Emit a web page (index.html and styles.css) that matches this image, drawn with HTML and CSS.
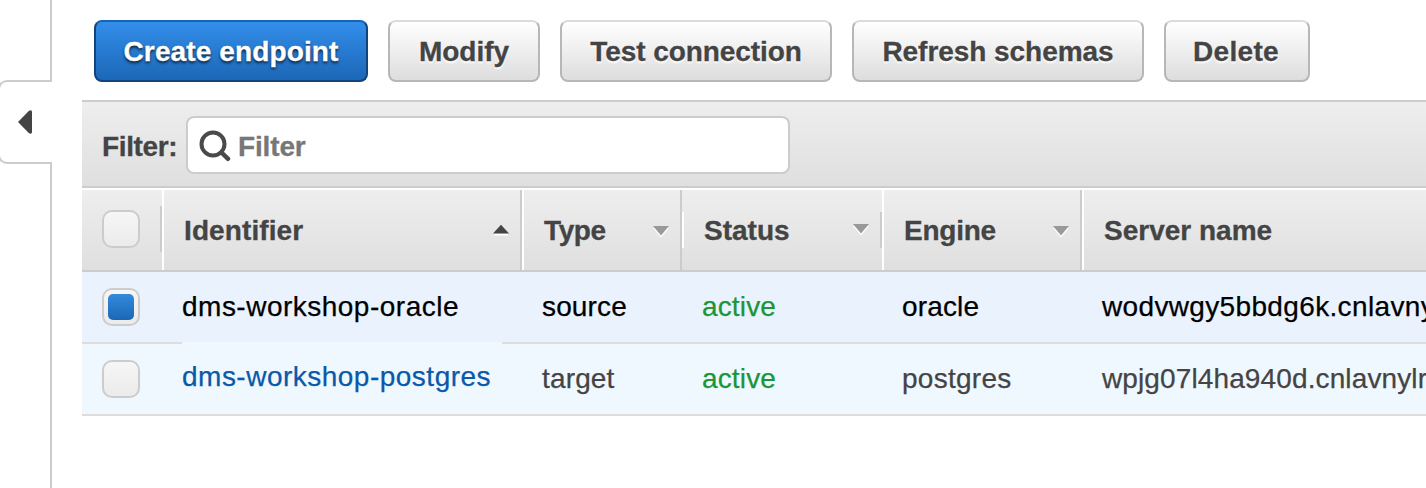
FILE: index.html
```html
<!DOCTYPE html>
<html lang="en">
<head>
<meta charset="utf-8">
<title>Endpoints</title>
<link rel="stylesheet" href="styles.css">
</head>
<body>
<div class="app">
  <aside class="rail">
    <div class="rail-line rail-top"></div>
    <div class="rail-tab"><svg width="14" height="24" viewBox="0 0 14 24"><path d="M0 12 11 .8Q14-.6 14 2V22Q14 24.600 11 23.200Z" fill="#444"/></svg></div>
    <div class="rail-line rail-bottom"></div>
  </aside>
  <main class="main">
    <div class="toolbar">
      <button class="btn primary w-create">Create endpoint</button>
      <button class="btn w-modify">Modify</button>
      <button class="btn w-test">Test connection</button>
      <button class="btn w-refresh">Refresh schemas</button>
      <button class="btn w-delete">Delete</button>
    </div>
    <div class="filterbar">
      <span class="filter-label">Filter:</span>
      <div class="filter-input">
        <svg class="search" width="34" height="34" viewBox="0 0 34 34" fill="none" stroke="#4a4a4a"><circle cx="15" cy="15" r="11.500" stroke-width="4"/><path d="M23.500 23.500 30 29.800" stroke-width="4.500" stroke-linecap="round"/></svg>
        <span class="placeholder">Filter</span>
      </div>
    </div>
    <div class="grid head">
      <div class="th check short-end"><span class="box"></span></div>
      <div class="th start end"><span class="t-ident">Identifier</span><svg class="sort" width="16" height="12" viewBox="0 0 16 12"><path d="M1 10.500H15" stroke="#fff" stroke-width="2"/><path d="M0 9.500 8 .8 16 9.500Z" fill="#444"/></svg></div>
      <div class="th start end"><span class="t-type">Type</span><svg class="sort down" width="16" height="12" viewBox="0 0 16 12"><path d="M0 2 8 11.500 16 2Z" fill="#fff"/><path d="M0 0H16L8 9.500Z" fill="#999"/></svg></div>
      <div class="th short-start short-end"><span class="t-status">Status</span><svg class="sort" width="16" height="12" viewBox="0 0 16 12"><path d="M0 2 8 11.500 16 2Z" fill="#fff"/><path d="M0 0H16L8 9.500Z" fill="#999"/></svg></div>
      <div class="th start end"><span class="t-engine">Engine</span><svg class="sort down" width="16" height="12" viewBox="0 0 16 12"><path d="M0 2 8 11.500 16 2Z" fill="#fff"/><path d="M0 0H16L8 9.500Z" fill="#999"/></svg></div>
      <div class="th start"><span class="t-server">Server name</span></div>
    </div>
    <div class="grid row selected">
      <div class="check"><span class="box"><span class="tick"></span></span></div>
      <div><span class="c-id">dms-workshop-oracle</span></div>
      <div><span class="c-short">source</span></div>
      <div class="active"><span class="c-short">active</span></div>
      <div><span class="c-short">oracle</span></div>
      <div><span class="c-host1">wodvwgy5bbdg6k.cnlavny</span></div>
    </div>
    <div class="grid row">
      <div class="check"><span class="box"></span></div>
      <div><a class="link c-id">dms-workshop-postgres</a></div>
      <div><span class="c-short">target</span></div>
      <div class="active"><span class="c-short">active</span></div>
      <div><span class="c-postgres">postgres</span></div>
      <div><span class="c-host2">wpjg07l4ha940d.cnlavnylr</span></div>
    </div>
  </main>
</div>
</body>
</html>
```
FILE: styles.css
```css
* { box-sizing: border-box; }
body { margin: 0; background: #fff; color: #444; font: 28px "Liberation Sans", Arial, sans-serif; overflow: hidden; }
svg { display: block; flex: none; }
.app { display: flex; height: 488px; }
.rail { width: 52px; flex: none; display: flex; flex-direction: column; }
.rail-line { border-right: 2px solid #ccc; }
.rail-top { height: 80px; }
.rail-bottom { flex: 1; }
.rail-tab { height: 84px; margin-left: -2px; border: 2px solid #ccc; border-right: 0; border-radius: 9px 0 0 9px; padding: 28px 0 0 18px; }
.main { flex: 1; min-width: 0; margin-left: 30px; }
.toolbar { height: 100px; padding: 20px 0 0 12px; display: flex; gap: 20px; }
.btn { height: 62px; flex: none; padding: 2px 0 0; border: 2px solid #b7b7b7; border-top-color: #dcdcdc; border-radius: 8px; background: linear-gradient(#fff, #ddd); color: #444; font: bold 28px "Liberation Sans", Arial, sans-serif; text-shadow: 0 2px 2px #fff; white-space: nowrap; }
.primary { color: #fff; background: linear-gradient(#338eea, #1b67b7); border-color: #12447b; border-top-color: #1763b5; text-shadow: 0 2px 3px rgba(0, 0, 0, .75); }
.btn, .filterbar, .head { -webkit-text-stroke: .3px; }
.w-create { width: 274px; letter-spacing: .12px; }
.w-modify { width: 152px; }
.w-test { width: 272px; letter-spacing: -.07px; }
.w-refresh { width: 292px; letter-spacing: -.05px; }
.w-delete { width: 146px; padding-right: 2px; letter-spacing: .3px; }
.filterbar { height: 88px; display: flex; align-items: center; border-top: 2px solid #ccc; border-bottom: 2px solid #ccc; background: linear-gradient(#eee, #dfdfdf); padding-left: 20px; font-weight: bold; }
.filter-label { width: 84px; letter-spacing: -.35px; padding-top: 5px; }
.filter-input { width: 604px; height: 58px; margin-top: 2px; display: flex; align-items: center; border: 2px solid #ccc; border-radius: 8px; background: #fff; color: #777; padding-left: 10px; }
.search { filter: blur(.5px); margin-top: 2px; }
.placeholder { margin-left: 6px; letter-spacing: -.15px; padding-top: 3px; }
.grid { display: grid; grid-template-columns: 80px 360px 160px 200px 200px 1fr; white-space: nowrap; }
.head { height: 84px; border-top: 2px solid #fff; border-bottom: 2px solid #ccc; background: linear-gradient(#eee, #dfdfdf); font-weight: bold; line-height: 78px; }
.th { height: 80px; display: flex; align-items: center; justify-content: space-between; padding: 0 13px 0 22px; background-repeat: no-repeat; }
.th > span:not(.box) { padding-top: 2px; }
.t-ident { letter-spacing: .1px; }
.t-type { letter-spacing: -.4px; }
.t-engine { letter-spacing: -.25px; }
.start { border-left: 2px solid #fff; padding-left: 20px; }
.end { border-right: 2px solid #ccc; padding-right: 11px; }
.short-start { background-image: linear-gradient(#fff, #fff), linear-gradient(#ccc, #ccc); background-size: 2px 36px, 2px 36px; background-position: left center, right center; }
.check.short-end { background-image: linear-gradient(#ccc, #ccc); background-size: 2px 46px; background-position: right 16px; }
.head .check { padding: 0 0 2px 20px; }
.sort { margin-bottom: 1px; }
.sort.down { margin-bottom: -3px; }
.row { height: 72px; line-height: 70px; background: #f0f8ff; border-bottom: 2px solid #ddd; -webkit-text-stroke: .25px; }
.row > div { padding-left: 20px; }
.row > .check { display: flex; align-items: center; }
.row > div:last-child { overflow: hidden; }
.selected { background: #eaf2fe; color: #000; border-bottom: 2px solid; border-image: linear-gradient(90deg, #ddd 100px, #f0f8ff 100px, #f0f8ff 420px, #ddd 420px) 0 0 2 0; border-width: 0 0 2px; }
.box { width: 38px; height: 38px; padding: 4px; border: 2px solid #ccc; border-radius: 10px; background: linear-gradient(#f6f6f6, #ebebeb); }
.tick { display: block; width: 26px; height: 26px; border-radius: 5px; background: linear-gradient(#338adb, #1b67b7); }
.active { color: #1a9638; }
.link { color: #0a59a8; display: block; line-height: 66px; }
.c-id { letter-spacing: .49px; }
.c-short { letter-spacing: .15px; }
.c-postgres { letter-spacing: .27px; }
.c-host1 { letter-spacing: .35px; }
.c-host2 { letter-spacing: .12px; }
```
